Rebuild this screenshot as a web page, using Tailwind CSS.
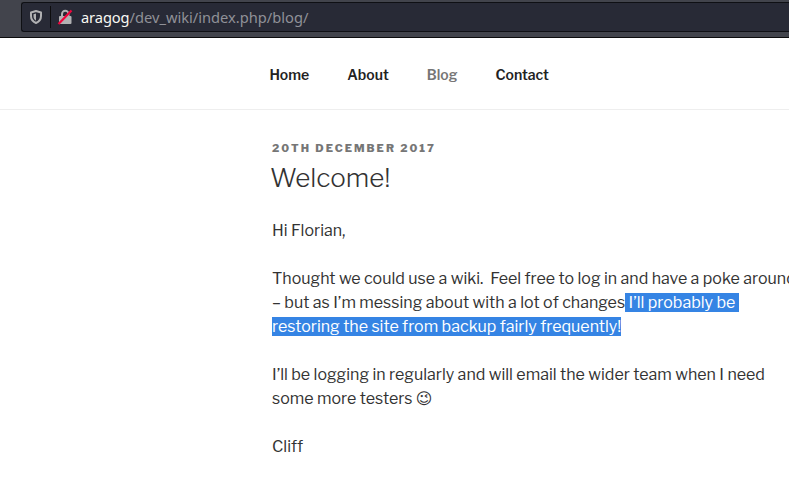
<!DOCTYPE html>
<html lang="en">
<head>
<meta charset="utf-8">
<title>Blog</title>
<script src="https://cdn.jsdelivr.net/npm/@tailwindcss/browser@4"></script>
</head>
<body class="h-[483px] overflow-hidden bg-white font-['Libre_Franklin','Liberation_Sans','DejaVu_Sans',sans-serif] text-[#333]">
<div class="h-[38px] border-b border-[#0c0c0d] bg-[#42444c] pt-[2px] pl-[21px]">
  <div class="flex h-[30px] items-center rounded-l-[3px] border border-r-0 border-[#0f1014] bg-[#282a36] pl-[7px]">
    <svg class="h-4 w-4 shrink-0" viewBox="0 0 16 16" fill="none"><path d="M7 2 2 3.500V7c0 3.500 2 5.700 5 7 3-1.300 5-3.500 5-7V3.500Z" stroke="#b1b1b3" stroke-width="2" stroke-linejoin="round"/><path d="M7 4.500v7.200C5.200 10.500 4.500 9 4.500 7V5.200Z" fill="#b1b1b3"/></svg>
    <div class="ml-[5px] h-[22px] w-px bg-[#0c0c0d]"></div>
    <svg class="ml-[6px] h-4 w-4 shrink-0" viewBox="0 0 16 16" fill="none"><path d="M5 8V5a3 3 0 0 1 6.500 0v3" stroke="#b1b1b3" stroke-width="2"/><rect x="2" y="7" width="12.500" height="8" rx="1" fill="#b1b1b3"/><path d="M1.500 15 14.500 1.500" stroke="#f0053c" stroke-width="2.200"/></svg>
    <div class="ml-[8px] font-['Noto_Sans',sans-serif] text-[14.667px] leading-5 whitespace-nowrap text-[#909198]"><span class="tracking-[-0.1px] text-[#f8f8f2]">aragog</span>/dev_wiki/index.php/blog/</div>
  </div>
</div>
<nav class="flex h-[72px] items-center gap-[38px] border-b border-[#eee] pb-px pl-[269.4px] pt-[2px] text-[14px] leading-[21px] font-semibold text-[#222]">
  <a>Home</a><a>About</a><a class="text-[#767676]">Blog</a><a>Contact</a>
</nav>
<main class="pl-[272px] pt-[30px]">
  <p class="text-[11px] leading-4 font-extrabold tracking-[0.1818em] text-[#767676] uppercase">20th December 2017</p>
  <h1 class="-ml-[2px] mt-[4px] text-[26px] leading-[36px] font-light">Welcome!</h1>
  <div class="mt-[23px] flex flex-col gap-6 text-[16px] leading-6 whitespace-nowrap">
    <p>Hi Florian,</p>
    <p>Thought we could use a wiki.&nbsp; Feel free to log in and have a poke around<br>– but as I’m messing about with a lot of changes<span class="bg-[#3584e4] text-white"> I’ll probably be&nbsp;</span><br><span class="bg-[#3584e4] text-white">restoring the site from backup fairly frequently!</span></p>
    <p>I’ll be logging in regularly and will email the wider team when I need<br>some more testers <span class="font-['DejaVu_Sans']">😉</span></p>
    <p>Cliff</p>
  </div>
</main>
</body>
</html>
